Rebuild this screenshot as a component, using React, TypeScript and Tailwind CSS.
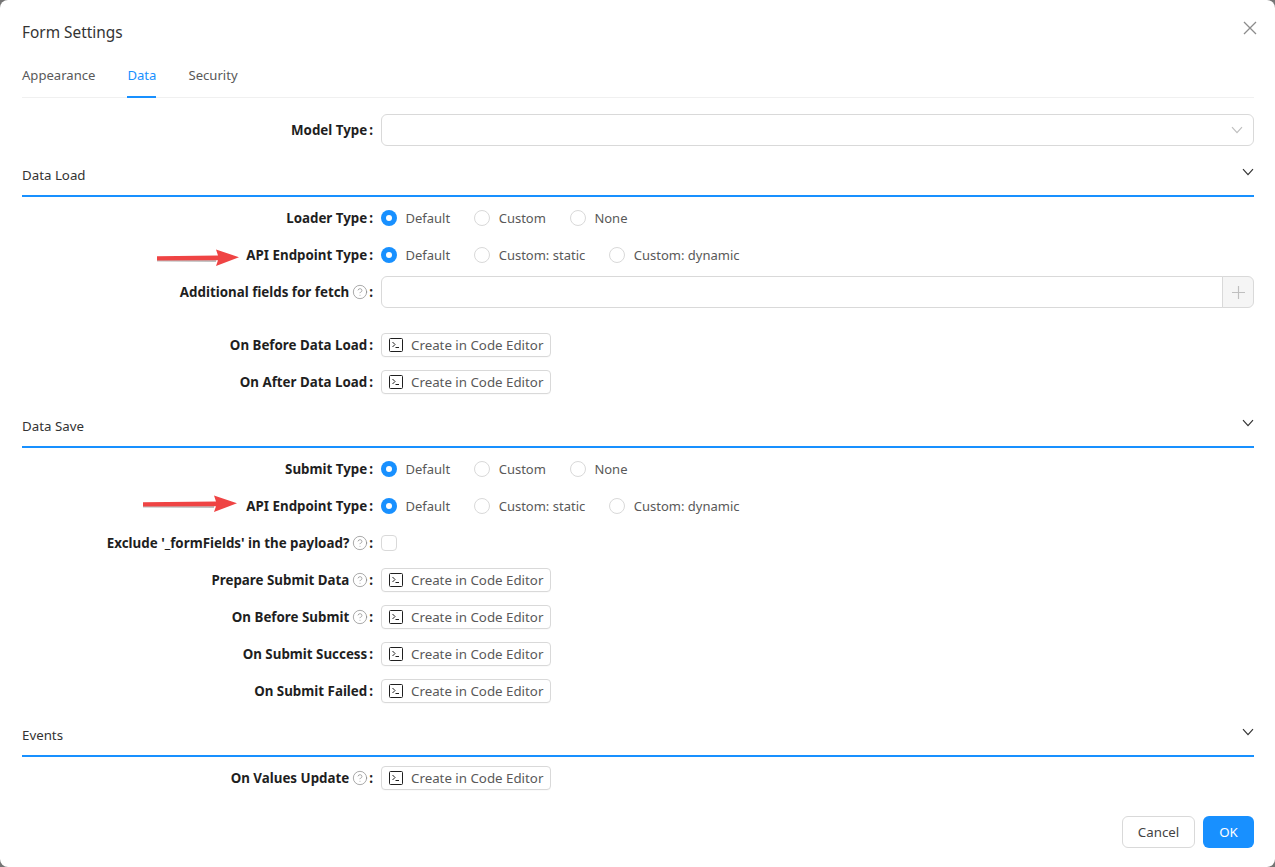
import { CircleHelp } from "lucide-react";

function TerminalIcon() {
  return (
    <svg width="14" height="14" viewBox="0 0 14 14" fill="none" stroke="#1f1f1f" strokeWidth="1">
      <rect x="0.5" y="0.5" width="13" height="13" rx="1" />
      <path d="M3.5 4l2.5 2.5L3.5 9" />
      <path d="M6.5 9.5h3.5" />
    </svg>
  );
}

function Chevron({ color = "#333" }: { color?: string }) {
  return (
    <svg width="12" height="8" viewBox="0 0 12 8" fill="none" stroke={color} strokeWidth="1.2">
      <path d="M1 1.2l5 5.4 5-5.4" />
    </svg>
  );
}

// hand drawn red arrow from the annotation, gray edge under the shaft
function RedArrow({ width }: { width: number }) {
  const base = width - 23;
  return (
    <svg width={width} height="18" viewBox={`0 0 ${width} 18`}>
      <path d={`M0 8.5L${base} 8V13L0 12.5z`} fill="#8a8a8a" opacity="0.55" />
      <path
        d={`M0 7.2L${base + 2} 6.4 ${base} 0.5 ${width} 8.2 ${base} 17 ${base + 2} 11.2 0 11.4z`}
        fill="#ef4444"
      />
    </svg>
  );
}

function Row({
  label,
  help,
  className = "mb-[5px]",
  children,
}: {
  label: string;
  help?: boolean;
  className?: string;
  children: React.ReactNode;
}) {
  return (
    <div className={`flex items-center h-[32px] ${className}`}>
      <div className="w-[351px] flex items-center justify-end font-bold text-[13.35px] text-[#1f1f1f]">
        <span>{label}</span>
        {help && <CircleHelp size={16} strokeWidth={1} color="#7f7f7f" className="ml-[3px] -mr-px" />}
        <span className="ml-[2px]">:</span>
      </div>
      <div className="flex-1 ml-[8px] min-w-0">{children}</div>
    </div>
  );
}

function Radios({ options }: { options: string[] }) {
  return (
    <div className="flex items-center gap-[24px] text-[13px]">
      {options.map((option, i) => (
        <div key={option} className="flex items-center gap-[8.5px] text-[#595959]">
          {i === 0 ? (
            <span className="w-[16px] h-[16px] rounded-full bg-[#1890ff] flex items-center justify-center">
              <span className="w-[6px] h-[6px] rounded-full bg-white" />
            </span>
          ) : (
            <span className="w-[16px] h-[16px] rounded-full border border-[#d9d9d9] bg-white" />
          )}
          <span>{option}</span>
        </div>
      ))}
    </div>
  );
}

function CodeButton() {
  return (
    <button className="h-[24px] w-[170px] flex items-center gap-[8px] pl-[7px] border border-[#d9d9d9] rounded-[4px] bg-white text-[#595959] shadow-[0_1px_0_rgba(0,0,0,0.02)]">
      <TerminalIcon />
      <span>Create in Code Editor</span>
    </button>
  );
}

function SectionHeader({ title }: { title: string }) {
  return (
    <div className="h-[46px] flex items-start justify-between pt-[15px] border-b-2 border-[#1890ff] mb-[5px]">
      <span className="text-[#333333]">{title}</span>
      <span className="mt-[2px]">
        <Chevron />
      </span>
    </div>
  );
}

export default function App() {
  return (
    <div className="h-[867px] w-[1275px] bg-[#757575] overflow-hidden">
      <div
        className="relative h-full bg-white rounded-[8px] pl-[22px] pr-[21px] text-[13.3px] leading-[18px]"
        style={{ fontFamily: '"Noto Sans", sans-serif' }}
      >
        <button className="absolute top-[21px] right-[18px]">
          <svg width="14" height="14" viewBox="0 0 14 14" stroke="#8c8c8c" strokeWidth="1.3">
            <path d="M1 1l12 12M13 1L1 13" />
          </svg>
        </button>

        <div className="pt-[23px] text-[15.4px] leading-[20px] text-[#333333]">Form Settings</div>

        <div className="mt-[11px] h-[44px] flex gap-[32px] border-b border-[#f0f0f0] text-[13.1px] text-[#595959]">
          <div className="pt-[12px]">Appearance</div>
          <div className="pt-[12px] h-[44px] border-b-2 border-[#1890ff] text-[#1890ff]">Data</div>
          <div className="pt-[12px]">Security</div>
        </div>

        <Row label="Model Type" className="mt-[16px] mb-[5px]">
          <div className="h-[32px] border border-[#d9d9d9] rounded-[6px] flex items-center justify-end pr-[10px]">
            <Chevron color="#bfbfbf" />
          </div>
        </Row>

        <SectionHeader title="Data Load" />
        <Row label="Loader Type">
          <Radios options={["Default", "Custom", "None"]} />
        </Row>
        <Row label="API Endpoint Type">
          <Radios options={["Default", "Custom: static", "Custom: dynamic"]} />
        </Row>
        <Row label="Additional fields for fetch" help className="mb-[21px]">
          <div className="h-[32px] flex">
            <div className="flex-1 border border-[#d9d9d9] rounded-l-[6px]" />
            <div className="w-[32px] border border-[#d9d9d9] -ml-px rounded-r-[6px] bg-[#f5f5f5] flex items-center justify-center">
              <svg width="13" height="13" viewBox="0 0 13 13" stroke="#bfbfbf" strokeWidth="1.2">
                <path d="M6.5 0v13M0 6.5h13" />
              </svg>
            </div>
          </div>
        </Row>
        <Row label="On Before Data Load"><CodeButton /></Row>
        <Row label="On After Data Load" className="mb-[4px]"><CodeButton /></Row>

        <SectionHeader title="Data Save" />
        <Row label="Submit Type">
          <Radios options={["Default", "Custom", "None"]} />
        </Row>
        <Row label="API Endpoint Type">
          <Radios options={["Default", "Custom: static", "Custom: dynamic"]} />
        </Row>
        <Row label="Exclude '_formFields' in the payload?" help>
          <span className="block w-[16px] h-[16px] border border-[#d9d9d9] rounded-[4px] bg-white" />
        </Row>
        <Row label="Prepare Submit Data" help><CodeButton /></Row>
        <Row label="On Before Submit" help><CodeButton /></Row>
        <Row label="On Submit Success"><CodeButton /></Row>
        <Row label="On Submit Failed" className="mb-[4px]"><CodeButton /></Row>

        <SectionHeader title="Events" />
        <Row label="On Values Update" help><CodeButton /></Row>

        <div className="mt-[22px] flex justify-end gap-[8px]">
          <button className="h-[32px] w-[73px] border border-[#d9d9d9] rounded-[6px] bg-white text-[#434343]">Cancel</button>
          <button className="h-[32px] w-[51px] rounded-[6px] bg-[#1890ff] text-white">OK</button>
        </div>

        <div className="absolute left-[157px] top-[249px]"><RedArrow width={82} /></div>
        <div className="absolute left-[143px] top-[495px]"><RedArrow width={94} /></div>
      </div>
    </div>
  );
}
